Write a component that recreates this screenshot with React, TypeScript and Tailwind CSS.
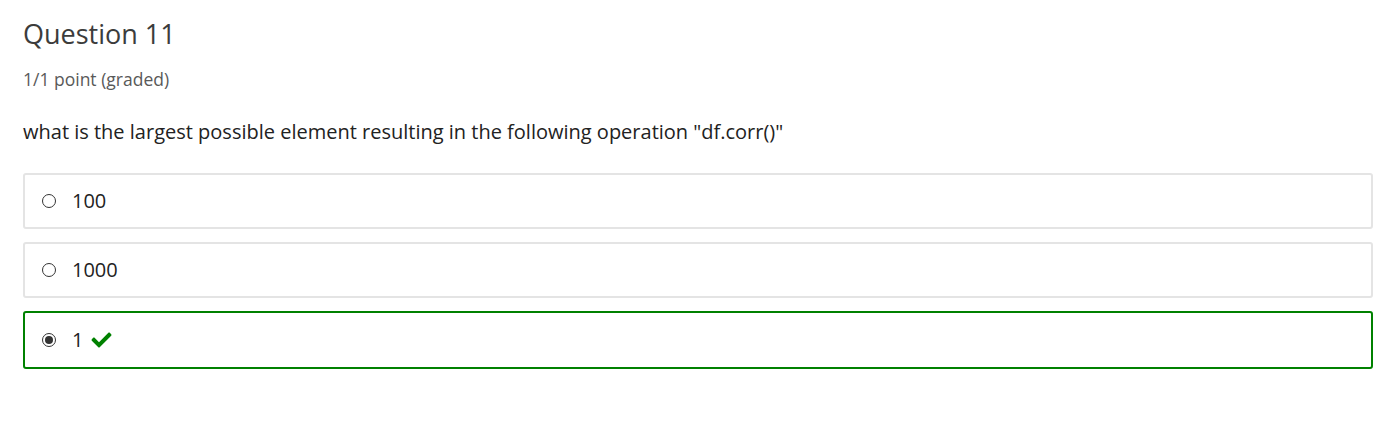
const options = [
  { id: "a", label: "100", selected: false, correct: false },
  { id: "b", label: "1000", selected: false, correct: false },
  { id: "c", label: "1", selected: true, correct: true },
];

function Radio({ checked }: { checked: boolean }) {
  return (
    <span className="flex h-[14px] w-[14px] shrink-0 items-center justify-center rounded-full border border-[#333] bg-white">
      {checked && <span className="h-[8px] w-[8px] rounded-full bg-[#333]" />}
    </span>
  );
}

function Check() {
  return (
    <svg viewBox="0 0 512 512" className="h-[20px] w-[21px]" fill="#008100">
      <path d="M173.9 439.4l-166.4-166.4c-10-10-10-26.2 0-36.2l36.2-36.2c10-10 26.2-10 36.2 0L192 312.7 432.1 72.6c10-10 26.2-10 36.2 0l36.2 36.2c10 10 10 26.2 0 36.2l-294.4 294.4c-10 10-26.2 10-36.2 0z" />
    </svg>
  );
}

export default function App() {
  return (
    <main className="min-h-screen bg-white px-[23px] pt-[17px] font-['Open_Sans',sans-serif] text-[#313131]">
      <h3 className="text-[27px] leading-[34px] text-[#3c3c3c]">Question 11</h3>
      <p className="mt-[15px] text-[17.5px] leading-[26px] text-[#595959]">1/1 point (graded)</p>
      <p className="mt-[25px] text-[20px] leading-[30px] text-[#222]">
        what is the largest possible element resulting in the following operation "df.corr()"
      </p>
      <div className="mt-[26px] flex w-[1350px] flex-col gap-[13px]">
        {options.map((o) => (
          <label
            key={o.id}
            className={
              o.correct
                ? "flex h-[58px] items-center gap-[16px] rounded-[3px] border-2 border-[#008100] px-[17px]"
                : "flex h-[56px] items-center gap-[16px] rounded-[3px] border-2 border-[#e4e4e4] px-[17px]"
            }
          >
            <Radio checked={o.selected} />
            <span className="flex items-center gap-[8px] text-[20px] text-[#222]">
              {o.label}
              {o.correct && <Check />}
            </span>
          </label>
        ))}
      </div>
    </main>
  );
}
